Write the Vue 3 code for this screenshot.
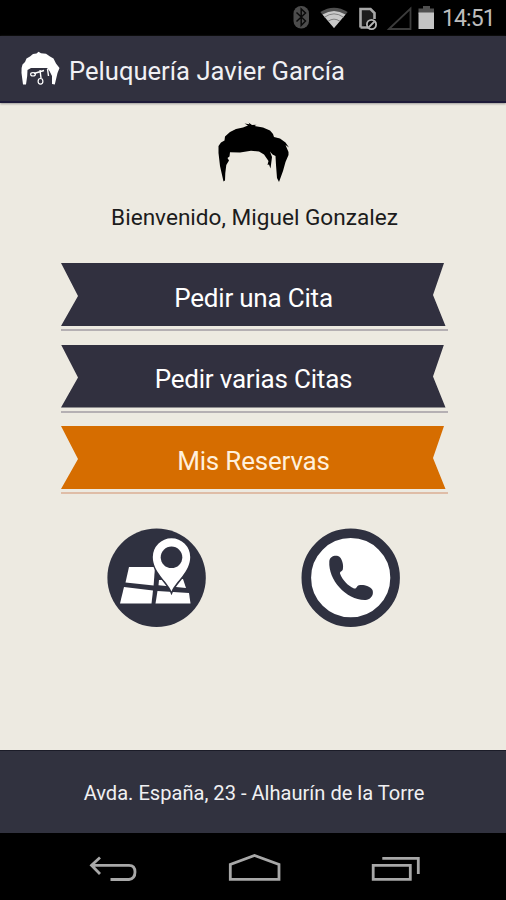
<script setup>
import { ref } from "vue";

const time = ref("14:51");
const user = ref("Miguel Gonzalez");

const options = [
  { id: "cita", label: "Pedir una Cita" },
  { id: "citas", label: "Pedir varias Citas" },
  { id: "reservas", label: "Mis Reservas", active: true },
];
</script>

<template>
  <div class="screen">
    <div class="status-bar">
      <svg class="status-icons" width="160" height="36" viewBox="280 0 160 36">
        <!-- bluetooth -->
        <rect x="293.5" y="6" width="15.5" height="22.5" rx="7.5" fill="#4c4c4c" />
        <path d="M296.5 12.5 L305.5 21 L301.2 25.5 V9 L305.5 13 L296.5 21.5" fill="none" stroke="#0a0a0a" stroke-width="1.5" />
        <!-- wifi -->
        <path d="M334 28 L320.3 12 Q334 3.5 347.7 12 Z" fill="#505050" />
        <path d="M334 28 L322.5 14.5 Q334 7.5 345.5 14.5 Z" fill="#c8c8c8" />
        <path d="M324.5 17.2 Q334 10.5 343.5 17.2 M328 21.3 Q334 17 340 21.3" fill="none" stroke="#777" stroke-width="0.9" />
        <!-- sim -->
        <path d="M360.5 27.5 V9 H370.5 L374.5 13 V19 M360.5 27.5 H368" fill="#1c1c1c" stroke="#a8a8a8" stroke-width="2.6" />
        <circle cx="371.5" cy="24.5" r="4.6" fill="#000" stroke="#b4b4b4" stroke-width="1.8" />
        <path d="M368.5 27.5 L374.5 21.5" stroke="#b4b4b4" stroke-width="1.8" />
        <!-- signal -->
        <path d="M389 29 L410.5 8.5 V29 Z" fill="none" stroke="#3c3c3c" stroke-width="1.8" />
        <!-- battery -->
        <path d="M423 6 H430 V8.5 H434 V14 H418.5 V8.5 H423 Z" fill="#505050" />
        <rect x="418.5" y="12.5" width="15.5" height="16.5" fill="#c4c4c4" />
      </svg>
      <span class="time">{{ time }}</span>
    </div>

    <header class="action-bar">
      <svg class="logo" width="42" height="36" viewBox="20 52 42 36">
        <path
          d="M23 85.5 L21.5 74 Q21 69 22.5 65.5 L25 63 L26.5 59.5 L30 57.5 L33 55 L36.5 54.5 L38.5 52.8 L41 54.3 L46 54.8 L50 57.5 L53.5 59.5 L56 64.5 L59.5 69 L57.5 74 L54.8 85.5 L52 85 L52 77 L49.5 72 L47 69 H31 L27.5 71 L27.2 77 L26 85.5 Z"
          fill="#fff"
        />
        <path d="M34 74.5 L44 71.5 M41 79 L40 71 M47.5 70 L48.5 77" stroke="#fff" stroke-width="1.4" />
        <ellipse cx="33" cy="75.3" rx="2.4" ry="1.7" fill="none" stroke="#fff" stroke-width="1.2" />
        <ellipse cx="40.5" cy="82.3" rx="2.4" ry="2.8" fill="none" stroke="#fff" stroke-width="1.2" />
      </svg>
      <h1 class="title">Peluquería Javier García</h1>
    </header>

    <main class="content">
      <svg class="hair" width="76" height="66" viewBox="215 120 76 66">
        <path
          d="M223.5 181.5 L220 166 L218.5 153 V146 L221 142.5 L224.5 140.5 L225 136.5 L230 132 L236 129 L243 127.5 L248 125.5 L244.5 123.5 L249.5 124.3 L248.5 122.5 L252 125 L256.5 124.8 L254.5 126 L263 127.5 L270 130.5 L273 134 L274 137 L280 138.5 L285.5 142.5 L289 147.5 L285.5 145 L288.5 152 V155 L285.5 162 L283 171 L279 182 L277 178 L276 165 L275.5 156 L272.5 154.5 L270 151.5 L272 157 L271.5 161 L270.5 168.5 L269 164.5 L267.5 165 L268.5 161 L264 154.5 L259 151.5 L251 150.8 L240 152.5 L230 152.2 L229.5 156.5 L227.5 158 L229 160.5 L226.3 165 L225.3 173 L225 180.5 Z"
        />
      </svg>
      <p class="welcome">Bienvenido, {{ user }}</p>

      <div class="menu">
        <button v-for="option in options" :key="option.id" class="ribbon" :class="{ active: option.active }">
          <span class="ribbon-body">
            <span class="ribbon-label">{{ option.label }}</span>
          </span>
          <span class="ribbon-line"></span>
        </button>
      </div>

      <div class="shortcuts">
        <svg width="100" height="100" viewBox="107 528 100 100">
          <circle cx="156.6" cy="577.7" r="49.2" fill="#2f3140" />
          <path d="M129 567 H155 L153.6 585.5 L125.5 582.5 Z" fill="#fff" />
          <path d="M124 587 L153 590.5 L151.5 603.5 H120 Z" fill="#fff" />
          <path d="M159 580 L183 579 L186 588 L158.5 585.2 Z" fill="#fff" />
          <path d="M157.5 591 L189 593 L190.5 603.5 H155.5 Z" fill="#fff" />
          <path
            d="M171.5 591.5 C167 581 152.8 572 152.8 557 A18.7 18.7 0 0 1 190.2 557 C190.2 572 176 581 171.5 591.5 Z"
            fill="#fff"
            stroke="#2f3140"
            stroke-width="3"
            paint-order="stroke"
          />
          <circle cx="171.5" cy="557.3" r="10.8" fill="#2f3140" />
        </svg>
        <svg width="100" height="100" viewBox="301 528 100 100">
          <circle cx="350.7" cy="577.7" r="44.4" fill="#fff" stroke="#2f3140" stroke-width="9.6" />
          <path
            d="M329.3 561.5 C329.5 557 334 555 338 556 C342 557.5 344 565 342.8 569.5 C342 571.5 339.5 571.8 340 573.5 C342.5 580 347.5 585.5 354 588.5 C356.5 589.3 356.5 586 359 585.3 C364 584.5 370 586.3 372.5 590 C374 594.5 371.5 599 366 600 C347 601 328 580 329.3 561.5 Z"
            fill="#2f3140"
          />
        </svg>
      </div>
    </main>

    <footer class="address">
      <span>Avda. España, 23 - Alhaurín de la Torre</span>
    </footer>

    <nav class="nav-bar">
      <svg width="50" height="32" viewBox="89 853 50 32">
        <path d="M91 865.3 H129 Q135 865.3 135 872 T129 879.5 H110.5 M100 857.5 L91.5 865.3 L100 874" />
      </svg>
      <svg width="54" height="32" viewBox="227 853 54 32">
        <path d="M229.3 879.3 V864.5 L253.5 855.5 L278 864.5 V879.3 Z" />
      </svg>
      <svg width="52" height="32" viewBox="370 853 52 32">
        <path d="M373.2 865.3 H410.3 V879.3 H373.2 Z M382.3 858.3 H418.3 V874" />
      </svg>
    </nav>
  </div>
</template>

<style>
body {
  margin: 0;
  background: #000;
}
</style>

<style scoped>
.screen {
  display: flex;
  flex-direction: column;
  width: 506px;
  height: 900px;
  overflow: hidden;
  font-family: Roboto, "Liberation Sans", sans-serif;
  background: #edeae1;
}

svg {
  display: block;
  flex: none;
}

.status-bar {
  display: flex;
  justify-content: flex-end;
  height: 36px;
  background: #000;
}

.time {
  width: 66px;
  box-sizing: border-box;
  padding-left: 2px;
  font-size: 23px;
  letter-spacing: -0.9px;
  line-height: 38px;
  color: #bdbdbd;
}

.action-bar {
  display: flex;
  align-items: center;
  box-sizing: border-box;
  height: 67px;
  padding: 0 0 0 20px;
  background: #31313f;
  border-bottom: 2px solid #1d1a38;
  box-shadow: 0 1px 2px #9c9a98;
}

.title {
  margin: 4px 0 0 7px;
  font-size: 25.6px;
  font-weight: 400;
  white-space: nowrap;
  color: #f0f0f4;
}

.content {
  display: flex;
  flex-direction: column;
  align-items: center;
  height: 647px;
}

.hair {
  margin-top: 17px;
}

.welcome {
  margin: 17px 0 0 3px;
  font-size: 22.6px;
  line-height: 30px;
  white-space: nowrap;
  color: #1c1c1c;
}

.menu {
  display: flex;
  flex-direction: column;
  gap: 13.5px;
  width: 387px;
  margin: 30px 0 0 2px;
}

.ribbon {
  display: block;
  width: 100%;
  padding: 0;
  border: 0;
  background: none;
  font: inherit;
}

.ribbon-body {
  display: flex;
  align-items: center;
  justify-content: center;
  width: 385px;
  height: 63px;
  background: #31303f;
  clip-path: polygon(0.5px 0, 383.5px 0, 372.5px 32px, 385px 100%, 0.5px 100%, 17.5px 33px);
}

.ribbon-label {
  padding: 6px 0 0 1px;
  font-size: 26px;
  letter-spacing: -0.2px;
  white-space: nowrap;
  color: #fff;
}

.ribbon-line {
  display: block;
  height: 2px;
  margin-top: 3px;
  background: #b5b0b3;
}

.active .ribbon-body {
  background: #d66d00;
}

.active .ribbon-label {
  color: #fff0dc;
}

.active .ribbon-line {
  background: #dfbda7;
}

.shortcuts {
  display: flex;
  gap: 94px;
  margin: 34px 0 0 2px;
}

.address {
  display: flex;
  align-items: center;
  justify-content: center;
  box-sizing: border-box;
  height: 83px;
  padding: 1px 0 0 2px;
  font-size: 20.1px;
  font-weight: 400;
  white-space: nowrap;
  color: #f0f0f2;
  background: #31323f;
  border-top: 1px solid #1b1c28;
}

.nav-bar {
  display: flex;
  justify-content: space-between;
  box-sizing: border-box;
  height: 67px;
  padding: 20px 84px 0 89px;
  background: #000;
}

.nav-bar path {
  fill: none;
  stroke: #a8a8a8;
  stroke-width: 2.8;
}
</style>
